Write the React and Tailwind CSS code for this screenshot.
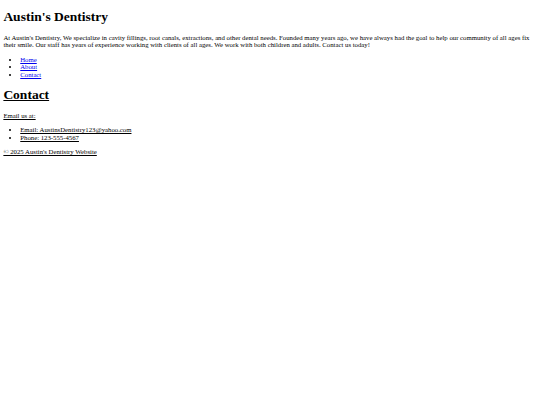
export default function App() {
  return (
    <div className="min-h-[405px] bg-white px-[3.375px] pt-[9.045px] text-black font-['Liberation_Serif','Times_New_Roman',serif]">
      <h1 className="mt-0 mb-[9.045px] text-[13.5px] font-bold leading-[15.61px]">Austin's Dentistry</h1>
      <p className="my-[6.75px] text-[6.75px] leading-[7.594px]">
        At Austin's Dentistry, We specialize in cavity fillings, root canals, extractions, and other dental needs. Founded many years ago, we have always had the goal to help our community of all ages fix their smile. Our staff has years of experience working with clients of all ages. We work with both children and adults. Contact us today!
      </p>
      <ul className="my-[6.75px] list-disc pl-[16.875px] text-[6.75px] leading-[7.594px]">
        <li><a href="#" className="text-[#0000ee] underline">Home</a></li>
        <li><a href="#" className="text-[#0000ee] underline">About</a></li>
        <li><a href="#" className="text-[#0000ee] underline">Contact</a></li>
      </ul>
      <h1 className="my-[9.045px] text-[13.5px] font-bold underline leading-[15.61px]">Contact</h1>
      <p className="my-[6.75px] text-[6.75px] leading-[7.594px] underline">Email us at:</p>
      <ul className="my-[6.75px] list-disc pl-[16.875px] text-[6.75px] leading-[7.594px] underline">
        <li>Email: AustinsDentistry123@yahoo.com</li>
        <li>Phone: 123-555-4567</li>
      </ul>
      <p className="my-[6.75px] text-[6.75px] leading-[7.594px] underline">© 2025 Austin's Dentistry Website</p>
    </div>
  );
}
